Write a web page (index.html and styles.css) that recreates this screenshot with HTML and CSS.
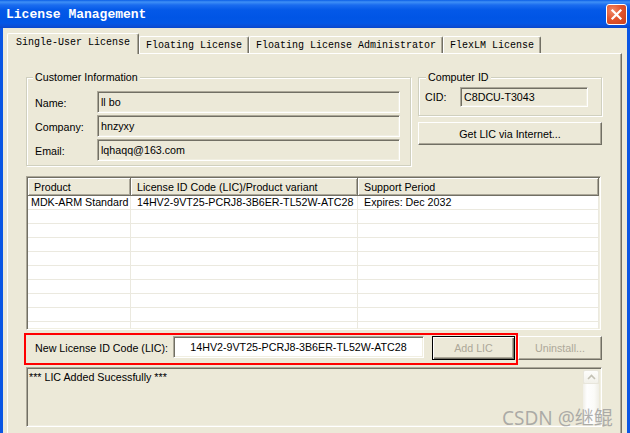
FILE: index.html
```html
<!DOCTYPE html>
<html>
<head>
<meta charset="utf-8">
<title>License Management</title>
<link rel="stylesheet" href="styles.css">
</head>
<body>
<div class="window">
  <div class="titlebar">
    <span class="title">License Management</span>
    <span class="close"><svg width="13" height="13" viewBox="0 0 13 13"><path d="M2.5 2.5 L10.5 10.5 M10.5 2.5 L2.5 10.5" stroke="#fff" stroke-width="2.2" stroke-linecap="square"/></svg></span>
  </div>
  <div class="client">
    <div class="tabs">
      <div class="tab active">Single-User License</div>
      <div class="tab">Floating License</div>
      <div class="tab">Floating License Administrator</div>
      <div class="tab">FlexLM License</div>
    </div>
    <div class="panel">
      <div class="top-row">
        <div class="group customer">
          <div class="group-title">Customer Information</div>
          <div class="field first-field"><span class="flabel">Name:</span><div class="textbox">ll bo</div></div>
          <div class="field"><span class="flabel">Company:</span><div class="textbox">hnzyxy</div></div>
          <div class="field"><span class="flabel">Email:</span><div class="textbox">lqhaqq@163.com</div></div>
        </div>
        <div class="right-col">
          <div class="group computer">
            <div class="group-title">Computer ID</div>
            <div class="cid-row"><span class="cid-label">CID:</span><div class="textbox cid">C8DCU-T3043</div></div>
          </div>
          <div class="btn getlic">Get LIC via Internet...</div>
        </div>
      </div>
      <div class="listview">
        <table class="lv">
          <thead>
            <tr><th class="c1">Product</th><th class="c2">License ID Code (LIC)/Product variant</th><th class="c3">Support Period</th></tr>
          </thead>
          <tbody>
            <tr><td class="first">MDK-ARM Standard</td><td>14HV2-9VT25-PCRJ8-3B6ER-TL52W-ATC28</td><td>Expires: Dec 2032</td></tr>
            <tr><td></td><td></td><td></td></tr>
            <tr><td></td><td></td><td></td></tr>
            <tr><td></td><td></td><td></td></tr>
            <tr><td></td><td></td><td></td></tr>
            <tr><td></td><td></td><td></td></tr>
            <tr><td></td><td></td><td></td></tr>
            <tr><td></td><td></td><td></td></tr>
            <tr><td></td><td></td><td></td></tr>
            <tr><td></td><td></td><td></td></tr>
          </tbody>
        </table>
      </div>
      <div class="lic-row">
        <div class="redbox">
          <span class="lic-label">New License ID Code (LIC):</span>
          <div class="textbox white lic-input">14HV2-9VT25-PCRJ8-3B6ER-TL52W-ATC28</div>
          <div class="btn default disabled addlic">Add LIC</div>
        </div>
        <div class="btn disabled uninstall">Uninstall...</div>
      </div>
      <div class="output">
        <div class="output-text">*** LIC Added Sucessfully ***</div>
        <div class="scrollbar">
          <div class="sb-up"><svg width="9" height="6" viewBox="0 0 9 6"><path d="M1 5 L4.5 1.5 L8 5" fill="none" stroke="#c3c1b4" stroke-width="1.6"/></svg></div>
          <div class="sb-track"></div>
        </div>
      </div>
    </div>
  </div>
  <div class="watermark">CSDN @继鲲</div>
</div>
</body>
</html>
```

FILE: styles.css
```css
html, body {
  margin: 0;
  padding: 0;
}
body {
  width: 630px;
  height: 433px;
  overflow: hidden;
  font-family: "Liberation Sans", Arial, sans-serif;
  font-size: 10.7px;
  color: #000;
}
.window {
  position: relative;
  display: flex;
  flex-direction: column;
  width: 630px;
  height: 433px;
  background: #0a56e4;
}
.titlebar {
  height: 28px;
  flex: none;
  display: flex;
  align-items: center;
  justify-content: space-between;
  padding: 0 3px 0 6px;
  background: linear-gradient(180deg, #0a5ee6 0px, #3f90f6 2px, #1a6cef 5px, #0459e8 10px, #0055e5 18px, #0357e6 23px, #0a4fd8 26px, #0847cc 28px);
}
.title {
  font-family: "Liberation Mono", "DejaVu Sans Mono", monospace;
  font-weight: bold;
  font-size: 13px;
  color: #fff;
}
.close {
  width: 19px;
  height: 19px;
  border: 1px solid #fff;
  border-radius: 3px;
  display: flex;
  align-items: center;
  justify-content: center;
  background: radial-gradient(circle at 30% 30%, #f08a6a 0%, #e2552e 45%, #c8401c 100%);
}
.client {
  flex: 1;
  margin: 0 3px;
  background: #ece9d8;
  padding-top: 5px;
  display: flex;
  flex-direction: column;
  min-height: 0;
}
.tabs {
  display: flex;
  align-items: flex-end;
  height: 20px;
  padding-left: 4px;
  font-family: "Liberation Mono", "DejaVu Sans Mono", monospace;
  font-size: 10px;
  position: relative;
  z-index: 1;
}
.tab {
  box-sizing: border-box;
  height: 17px;
  padding: 0 6px;
  line-height: 17px;
  border-left: 1px solid #fff;
  border-top: 1px solid #fff;
  border-right: 1px solid #716f64;
  box-shadow: inset -1px 0 0 #aca899;
  border-radius: 2px 2px 0 0;
  background: #ece9d8;
  white-space: nowrap;
}
.tab.active {
  height: 21px;
  margin-bottom: -1px;
  padding: 0 8px;
  line-height: 18px;
}
.panel {
  flex: 1;
  margin: 0 5px 0 4px;
  border-top: 1px solid #fff;
  border-left: 1px solid #fff;
  border-right: 1px solid #716f64;
  box-shadow: inset -1px 0 0 #aca899;
  padding: 23px 19px 0 18px;
  display: flex;
  flex-direction: column;
  min-height: 0;
}
.top-row {
  display: flex;
  gap: 7px;
  align-items: flex-start;
}
.group {
  box-sizing: border-box;
  border: 1px solid #d0d0bf;
  box-shadow: inset 1px 1px 0 #fff, 1px 1px 0 #fff;
}
.group-title {
  align-self: flex-start;
  display: inline-block;
  margin-top: -7px;
  padding: 0 2px;
  line-height: 13px;
  background: #ece9d8;
}
.customer {
  width: 385px;
  padding: 0 10px 4px 8px;
  display: flex;
  flex-direction: column;
  gap: 2px;
}
.customer .group-title {
  margin-left: -2px;
}
.first-field {
  margin-top: 5px;
}
.field {
  display: flex;
  align-items: center;
}
.flabel {
  width: 62px;
  flex: none;
  padding-top: 2px;
}
.textbox {
  box-sizing: border-box;
  height: 22px;
  flex: 1;
  display: flex;
  align-items: center;
  padding: 0 3px;
  border: 1px solid;
  border-color: #aca899 #fff #fff #aca899;
  box-shadow: inset 1px 1px 0 #716f64, inset -1px -1px 0 #f1efe2;
  background: #ece9d8;
  white-space: nowrap;
  overflow: hidden;
}
.textbox.white {
  background: #fff;
}
.right-col {
  width: 184px;
  display: flex;
  flex-direction: column;
  gap: 6px;
}
.computer {
  height: 39px;
  padding: 0 13px 0 6px;
  display: flex;
  flex-direction: column;
}
.computer .group-title {
  margin-left: 1px;
}
.cid-row {
  display: flex;
  align-items: center;
  margin-top: 3px;
}
.cid-label {
  width: 35px;
}
.textbox.cid {
  height: 20px;
  flex: none;
  width: 128px;
}
.btn {
  box-sizing: border-box;
  display: flex;
  align-items: center;
  justify-content: center;
  background: #ece9d8;
  border: 1px solid;
  border-color: #fff #716f64 #716f64 #fff;
  box-shadow: inset -1px -1px 0 #aca899;
  white-space: nowrap;
}
.btn.disabled {
  color: #aca899;
}
.btn.default {
  border: 1px solid #000;
  box-shadow: inset 1px 1px 0 #fff, inset -1px -1px 0 #716f64, inset -2px -2px 0 #aca899;
}
.getlic {
  height: 23px;
}
.listview {
  box-sizing: border-box;
  width: 575px;
  height: 154px;
  margin-top: 10px;
  flex: none;
  padding: 1px;
  border: 1px solid;
  border-color: #aca899 #fff #fff #aca899;
  box-shadow: inset 1px 1px 0 #716f64, inset -1px -1px 0 #f1efe2;
  background: #fff;
  overflow: hidden;
}
.lv {
  width: 571px;
  table-layout: fixed;
  border-collapse: separate;
  border-spacing: 0;
  font-size: 10.7px;
}
.lv th, .lv td {
  box-sizing: border-box;
  white-space: nowrap;
  overflow: hidden;
  text-align: left;
  font-weight: normal;
}
.lv th {
  height: 18px;
  line-height: 16px;
  padding: 0 0 0 6px;
  background: #ece9d8;
  border-right: 1px solid #716f64;
  border-bottom: 1px solid #716f64;
  box-shadow: inset 1px 1px 0 #fff, inset -1px -1px 0 #aca899;
}
.lv th.c1 { width: 103px; }
.lv th.c2 { width: 227px; }
.lv td {
  height: 14px;
  line-height: 13px;
  padding: 0 0 0 6px;
  border-bottom: 1px solid #ebe9df;
  border-right: 1px solid #ebe9df;
}
.lv td.first {
  padding-left: 3px;
}
.lic-row {
  display: flex;
  align-items: flex-start;
  margin-top: 3px;
  flex: none;
}
.redbox {
  box-sizing: border-box;
  width: 494px;
  height: 32px;
  margin-left: -2px;
  border: 2px solid #ff0000;
  padding: 1px 1px 0 9px;
  display: flex;
  align-items: flex-start;
}
.lic-label {
  width: 138px;
  flex: none;
  line-height: 22px;
  padding-top: 1px;
}
.lic-input {
  flex: none;
  width: 251px;
  justify-content: center;
}
.addlic {
  width: 84px;
  height: 24px;
  margin-left: 8px;
}
.uninstall {
  width: 84px;
  height: 24px;
  margin-top: 3px;
}
.output {
  box-sizing: border-box;
  width: 576px;
  height: 60px;
  margin-top: 2px;
  flex: none;
  padding: 2px 1px 2px 2px;
  border: 1px solid;
  border-color: #aca899 #fff #fff #aca899;
  box-shadow: inset 1px 1px 0 #716f64, inset -1px -1px 0 #f1efe2;
  display: flex;
  justify-content: space-between;
}
.output-text {
  line-height: 13px;
  padding-top: 1px;
}
.scrollbar {
  width: 16px;
  display: flex;
  flex-direction: column;
  margin-right: 1px;
}
.sb-up {
  box-sizing: border-box;
  height: 14px;
  border: 1px solid #e8e6dc;
  border-radius: 2px;
  background: linear-gradient(180deg, #fdfdfb, #f2f1ea);
  display: flex;
  align-items: center;
  justify-content: center;
}
.sb-track {
  flex: 1;
  background: linear-gradient(90deg, #f0efe8 0%, #fefefe 25%, #fbfbf8 70%, #efeee6 100%);
}
.watermark {
  position: absolute;
  left: 502px;
  top: 403px;
  font-family: "Noto Sans", "Noto Sans CJK SC", sans-serif;
  font-size: 19px;
  color: rgba(150, 150, 150, 0.75);
  white-space: nowrap;
}
```
